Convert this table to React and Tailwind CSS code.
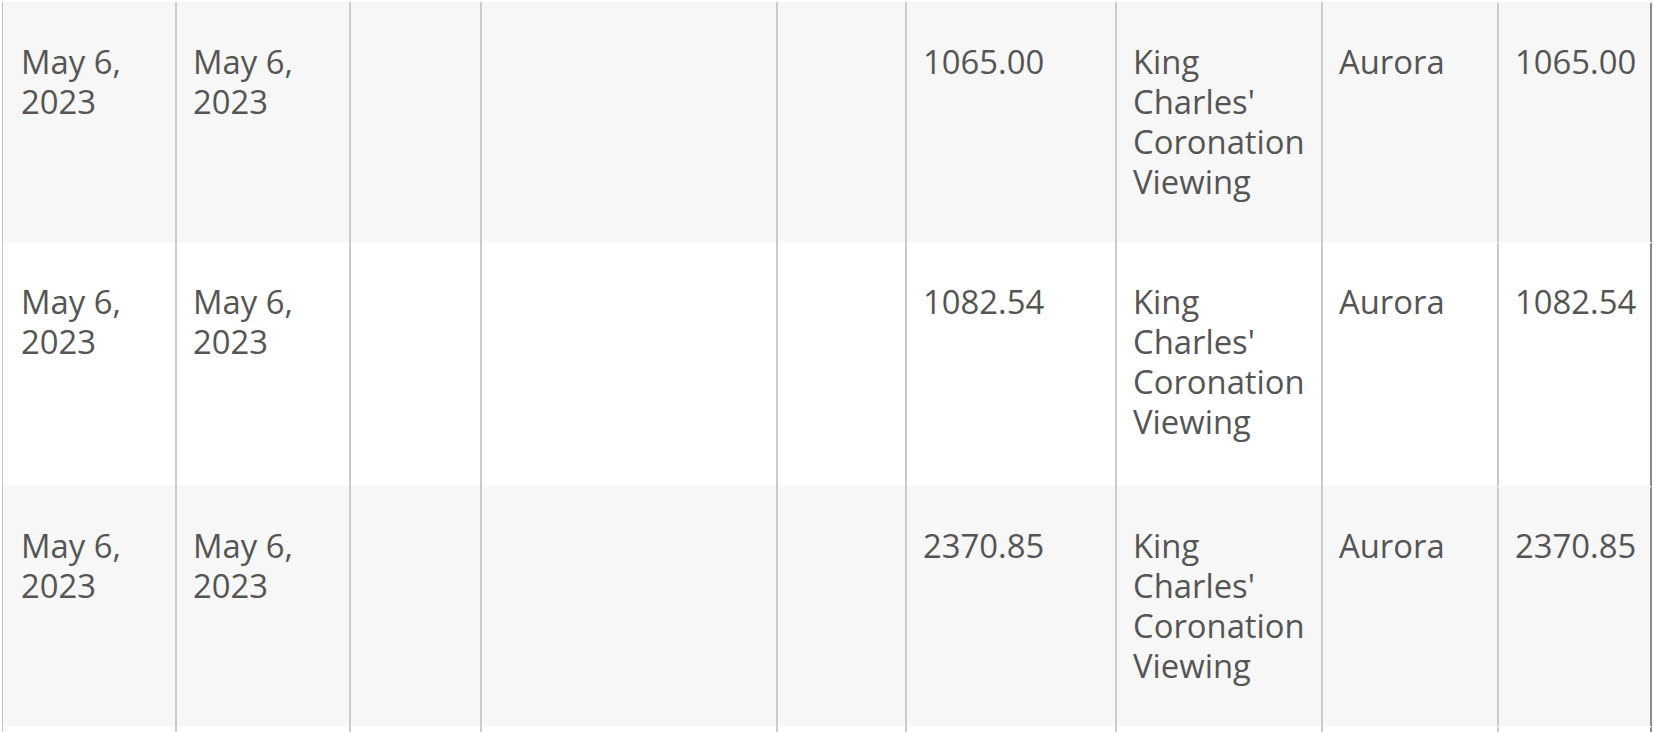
import React from 'react';

const rows = [
  { start: 'May 6, 2023', end: 'May 6, 2023', amount: '1065.00', event: "King Charles' Coronation Viewing", location: 'Aurora', total: '1065.00', h: 'h-[240px]' },
  { start: 'May 6, 2023', end: 'May 6, 2023', amount: '1082.54', event: "King Charles' Coronation Viewing", location: 'Aurora', total: '1082.54', h: 'h-[244px]' },
  { start: 'May 6, 2023', end: 'May 6, 2023', amount: '2370.85', event: "King Charles' Coronation Viewing", location: 'Aurora', total: '2370.85', h: 'h-[240px]' },
];

const cell = 'px-4 pt-10 pb-10 border-l-2 border-[#cbcbcb]';
const cols = 'grid grid-cols-[173px_174px_131px_296px_129px_210px_206px_176px_155px] w-[1650px]';

const App = () => {
  return (
    <div className="bg-white h-screen overflow-hidden pt-[2px] pl-[2px] text-[#555] text-[32.8px] leading-[40px] font-['Open_Sans',sans-serif]">
      {rows.map((r, i) => (
        <div key={i} className={`${cols} ${r.h} ${i % 2 === 0 ? 'bg-[#f7f7f7]' : 'bg-white'}`}>
          <div className="pr-4 pt-10 pb-10 border-l border-[#c4c4c4] pl-[18px]">{r.start}</div>
          <div className={cell}>{r.end}</div>
          <div className={cell}></div>
          <div className={cell}></div>
          <div className={cell}></div>
          <div className={cell}>{r.amount}</div>
          <div className={cell}>{r.event}</div>
          <div className={cell}>{r.location}</div>
          <div className="px-4 pt-[38px] pb-10 border-l-2 border-r-2 border-t-2 border-l-[#cbcbcb] border-r-[#8a8a8a] border-t-transparent">
            {r.total}
          </div>
        </div>
      ))}
      {/* next row, only its top shows */}
      <div className={`${cols} h-[240px] bg-white`}>
        <div className="border-l border-[#c4c4c4]"></div>
        <div className="border-l-2 border-[#cbcbcb]"></div>
        <div className="border-l-2 border-[#cbcbcb]"></div>
        <div className="border-l-2 border-[#cbcbcb]"></div>
        <div className="border-l-2 border-[#cbcbcb]"></div>
        <div className="border-l-2 border-[#cbcbcb]"></div>
        <div className="border-l-2 border-[#cbcbcb]"></div>
        <div className="border-l-2 border-[#cbcbcb]"></div>
        <div className="border-l-2 border-r-2 border-t-2 border-l-[#cbcbcb] border-r-[#8a8a8a] border-t-transparent"></div>
      </div>
    </div>
  );
};

export default App;
